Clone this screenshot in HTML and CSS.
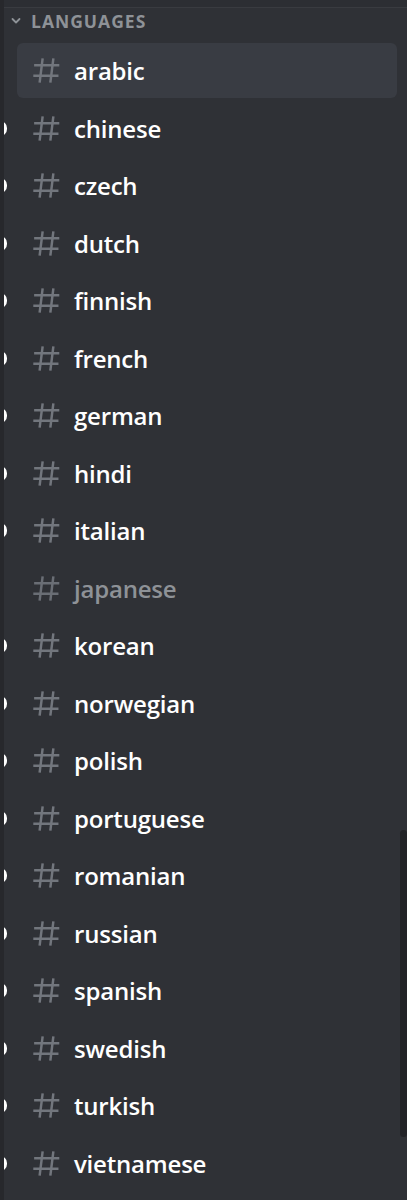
FILE: index.html
```html
<!DOCTYPE html>
<html>
<head>
<meta charset="utf-8">
<link rel="stylesheet" href="styles.css">
</head>
<body>
<div class="sidebar">
  <div class="topbar"></div>
  <div class="category">
    <svg class="chev" viewBox="0 0 12 12" width="12" height="12"><path d="M2.5 4 L6 7.5 L9.5 4" fill="none" stroke="#8e9297" stroke-width="1.8" stroke-linecap="round" stroke-linejoin="round"/></svg>
    <span class="cat-name">LANGUAGES</span>
  </div>
  <ul class="channels">
    <li class="channel selected"><svg class="hash" viewBox="0 0 24 24"><use href="#h"/></svg><span class="name">arabic</span></li>
    <li class="channel unread"><svg class="hash" viewBox="0 0 24 24"><use href="#h"/></svg><span class="name">chinese</span></li>
    <li class="channel unread"><svg class="hash" viewBox="0 0 24 24"><use href="#h"/></svg><span class="name">czech</span></li>
    <li class="channel unread"><svg class="hash" viewBox="0 0 24 24"><use href="#h"/></svg><span class="name">dutch</span></li>
    <li class="channel unread"><svg class="hash" viewBox="0 0 24 24"><use href="#h"/></svg><span class="name">finnish</span></li>
    <li class="channel unread"><svg class="hash" viewBox="0 0 24 24"><use href="#h"/></svg><span class="name">french</span></li>
    <li class="channel unread"><svg class="hash" viewBox="0 0 24 24"><use href="#h"/></svg><span class="name">german</span></li>
    <li class="channel unread"><svg class="hash" viewBox="0 0 24 24"><use href="#h"/></svg><span class="name">hindi</span></li>
    <li class="channel unread"><svg class="hash" viewBox="0 0 24 24"><use href="#h"/></svg><span class="name">italian</span></li>
    <li class="channel muted"><svg class="hash" viewBox="0 0 24 24"><use href="#h"/></svg><span class="name">japanese</span></li>
    <li class="channel unread"><svg class="hash" viewBox="0 0 24 24"><use href="#h"/></svg><span class="name">korean</span></li>
    <li class="channel unread"><svg class="hash" viewBox="0 0 24 24"><use href="#h"/></svg><span class="name">norwegian</span></li>
    <li class="channel unread"><svg class="hash" viewBox="0 0 24 24"><use href="#h"/></svg><span class="name">polish</span></li>
    <li class="channel unread"><svg class="hash" viewBox="0 0 24 24"><use href="#h"/></svg><span class="name">portuguese</span></li>
    <li class="channel unread"><svg class="hash" viewBox="0 0 24 24"><use href="#h"/></svg><span class="name">romanian</span></li>
    <li class="channel unread"><svg class="hash" viewBox="0 0 24 24"><use href="#h"/></svg><span class="name">russian</span></li>
    <li class="channel unread"><svg class="hash" viewBox="0 0 24 24"><use href="#h"/></svg><span class="name">spanish</span></li>
    <li class="channel unread"><svg class="hash" viewBox="0 0 24 24"><use href="#h"/></svg><span class="name">swedish</span></li>
    <li class="channel unread"><svg class="hash" viewBox="0 0 24 24"><use href="#h"/></svg><span class="name">turkish</span></li>
    <li class="channel unread"><svg class="hash" viewBox="0 0 24 24"><use href="#h"/></svg><span class="name">vietnamese</span></li>
  </ul>
  <div class="scrollbar"></div>
</div>
<svg width="0" height="0" class="defs">
  <defs>
    <g id="h">
      <path d="M9.2 3.2 L7.0 20.8 M17.0 3.2 L14.8 20.8 M3.0 8.2 H21.3 M2.4 15.8 H20.7" fill="none" stroke="currentColor" stroke-width="1.8" stroke-linecap="butt"/>
    </g>
  </defs>
</svg>
</body>
</html>
```

FILE: styles.css
```css
* { box-sizing: border-box; }
html, body { margin: 0; padding: 0; }
body {
  background: #2f3136;
  font-family: "Open Sans", "Noto Sans", sans-serif;
}
.defs { position: absolute; }
.sidebar {
  position: relative;
  width: 407px;
  height: 1200px;
  background: #2f3136;
  border-left: 4px solid #27282c;
  overflow: hidden;
}
.topbar {
  height: 8px;
  border-bottom: 1px solid #393b40;
  background: #2c2e33;
}
.category {
  display: flex;
  align-items: center;
  height: 26px;
  padding-left: 6px;
  gap: 9px;
  margin-bottom: 9px;
}
.chev { flex: none; }
.cat-name {
  color: #8e9297;
  font-weight: 700;
  font-size: 17.5px;
  letter-spacing: 1px;
}
.channels {
  list-style: none;
  margin: 0;
  padding: 0;
}
.channel {
  position: relative;
  display: flex;
  align-items: center;
  height: 55px;
  margin: 0 10px 2.5px 13px;
  padding-left: 13px;
  gap: 11px;
  border-radius: 6px;
  color: #72767d;
}
.channel.selected {
  background: #393c43;
}
.hash {
  width: 33px;
  height: 33px;
  flex: none;
  color: #72767d;
}
.name {
  font-size: 24px;
  font-weight: 600;
  color: #ffffff;
  letter-spacing: -0.2px;
}
.channel.muted .name { color: #8e9297; }
.channel.muted .hash { color: #6a6e75; }
.channel.unread::before {
  content: "";
  position: absolute;
  left: -17px;
  top: 20px;
  width: 7px;
  height: 15px;
  background: #ffffff;
  border-radius: 0 8px 8px 0;
}
.scrollbar {
  position: absolute;
  right: 0;
  top: 830px;
  width: 7px;
  height: 307px;
  background: #222327;
  border-radius: 4px;
}
```
